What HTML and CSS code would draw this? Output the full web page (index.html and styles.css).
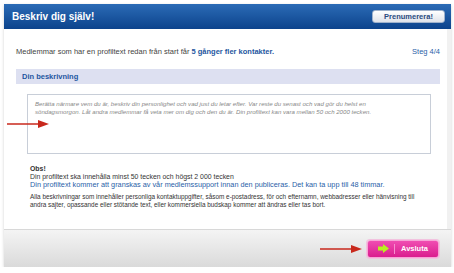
FILE: index.html
```html
<!DOCTYPE html>
<html lang="sv">
<head>
  <meta charset="UTF-8" />
  <title>Beskriv dig själv!</title>
  <link rel="stylesheet" href="styles.css">
</head>
<body>
  <div class="dialog">
    <header class="dialog-header">
      <h1>Beskriv dig själv!</h1>
      <button class="btn-subscribe">Prenumerera!</button>
    </header>

    <main class="dialog-body">
      <div class="intro">
        <p>Medlemmar som har en profiltext redan från start får <strong>5 gånger fler kontakter.</strong></p>
        <span class="step">Steg 4/4</span>
      </div>

      <h2 class="section-title">Din beskrivning</h2>

      <div class="field">
        <svg class="pointer pointer-field" width="42" height="8" viewBox="0 0 42 8">
          <line x1="0" y1="4" x2="34" y2="4" stroke="#c8281c" stroke-width="1.6"/>
          <path d="M31 0 L42 4 L31 8 Z" fill="#c8281c"/>
        </svg>
        <textarea id="description" placeholder="Berätta närmare vem du är, beskriv din personlighet och vad just du letar efter. Var reste du senast och vad gör du helst en&#10;söndagsmorgon. Låt andra medlemmar få veta mer om dig och den du är. Din profiltext kan vara mellan 50 och 2000 tecken."></textarea>
      </div>

      <div class="notes">
        <p class="obs">Obs!</p>
        <p>Din profiltext ska innehålla minst 50 tecken och högst 2 000 tecken</p>
        <p class="blue">Din profiltext kommer att granskas av vår medlemssupport innan den publiceras. Det kan ta upp till 48 timmar.</p>
        <p class="small">Alla beskrivningar som innehåller personliga kontaktuppgifter, såsom e-postadress, för och efternamn, webbadresser eller hänvisning till<br>andra sajter, opassande eller stötande text, eller kommersiella budskap kommer att ändras eller tas bort.</p>
      </div>
    </main>

    <footer class="dialog-footer">
      <svg class="pointer" width="42" height="8" viewBox="0 0 42 8">
        <line x1="0" y1="4" x2="34" y2="4" stroke="#c8281c" stroke-width="1.6"/>
        <path d="M31 0 L42 4 L31 8 Z" fill="#c8281c"/>
      </svg>
      <button class="btn-finish">
        <svg class="icon" width="11" height="9" viewBox="0 0 11 9">
          <path d="M0 2.5 H5 V0 L11 4.5 L5 9 V6.5 H0 Z" fill="#b8f020"/>
        </svg>
        <span class="sep"></span>
        <span>Avsluta</span>
      </button>
    </footer>
  </div>
</body>
</html>
```

FILE: styles.css
```css
* {
  margin: 0;
  padding: 0;
  box-sizing: border-box;
}
body {
  font-family: "Liberation Sans", Arial, sans-serif;
  background-color: #ffffff;
  padding: 4px 3px 0 4px;
  color: #333;
}
.dialog {
  width: 447px;
  box-shadow: 0 1px 3px rgba(0, 0, 0, 0.18);
}
.dialog-header {
  display: flex;
  align-items: center;
  justify-content: space-between;
  height: 25px;
  padding: 0 6px 0 8px;
  background: linear-gradient(#2b6bb6, #0c438c);
}
.dialog-header h1 {
  font-size: 10px;
  font-weight: 700;
  color: #fff;
}
.btn-subscribe {
  width: 73px;
  height: 13px;
  font-family: inherit;
  font-size: 7.5px;
  font-weight: 700;
  color: #2a4b80;
  background: linear-gradient(#ffffff, #dfe3ea);
  border: 1px solid #9fb2cc;
  border-radius: 3px;
}
.dialog-body {
  background: #fff;
  border-right: 4px solid #f1f1f1;
  padding: 18px 7px 20px 12px;
}
.intro {
  display: flex;
  justify-content: space-between;
  font-size: 7.5px;
  line-height: 10px;
  color: #444;
}
.intro strong {
  color: #1e56a0;
}
.step {
  color: #2a62a8;
}
.section-title {
  margin-top: 12px;
  height: 15px;
  line-height: 15px;
  padding-left: 6px;
  background: #dde0f1;
  font-size: 7.5px;
  font-weight: 700;
  color: #1e56a0;
}
.field {
  position: relative;
  margin: 10px 9px 0 11px;
}
.pointer-field {
  position: absolute;
  left: -20px;
  top: 26px;
}
textarea {
  display: block;
  width: 100%;
  height: 60px;
  padding: 5px 7px;
  border: 1px solid #c8ced8;
  font-family: inherit;
  font-size: 6.1px;
  line-height: 8px;
  resize: none;
  outline: none;
}
textarea::placeholder {
  color: #888;
  font-style: italic;
}
.notes {
  margin: 11px 0 0 14px;
  font-size: 6.9px;
  line-height: 8px;
  color: #333;
}
.notes .obs {
  font-weight: 700;
}
.notes .blue {
  font-size: 7.3px;
  color: #2a5fa8;
}
.notes .small {
  margin-top: 4px;
  font-size: 6.4px;
}
.dialog-footer {
  display: flex;
  align-items: center;
  justify-content: flex-end;
  gap: 5px;
  height: 38px;
  padding-right: 12px;
  border-top: 1px solid #d8d8d8;
  background: linear-gradient(#f4f4f4, #dadada);
}
.btn-finish {
  display: flex;
  align-items: center;
  width: 72px;
  height: 18px;
  padding-left: 10px;
  font-family: inherit;
  font-size: 7.5px;
  font-weight: 700;
  color: #fff;
  background: linear-gradient(#f04db2, #da1d8e);
  border: 1px solid #f7a4d6;
  border-radius: 3px;
  box-shadow: 0 0 0 1px #f2c2df;
}
.btn-finish .sep {
  width: 1px;
  height: 10px;
  margin: 0 6px 0 5px;
  background: #f78fcf;
}
```
